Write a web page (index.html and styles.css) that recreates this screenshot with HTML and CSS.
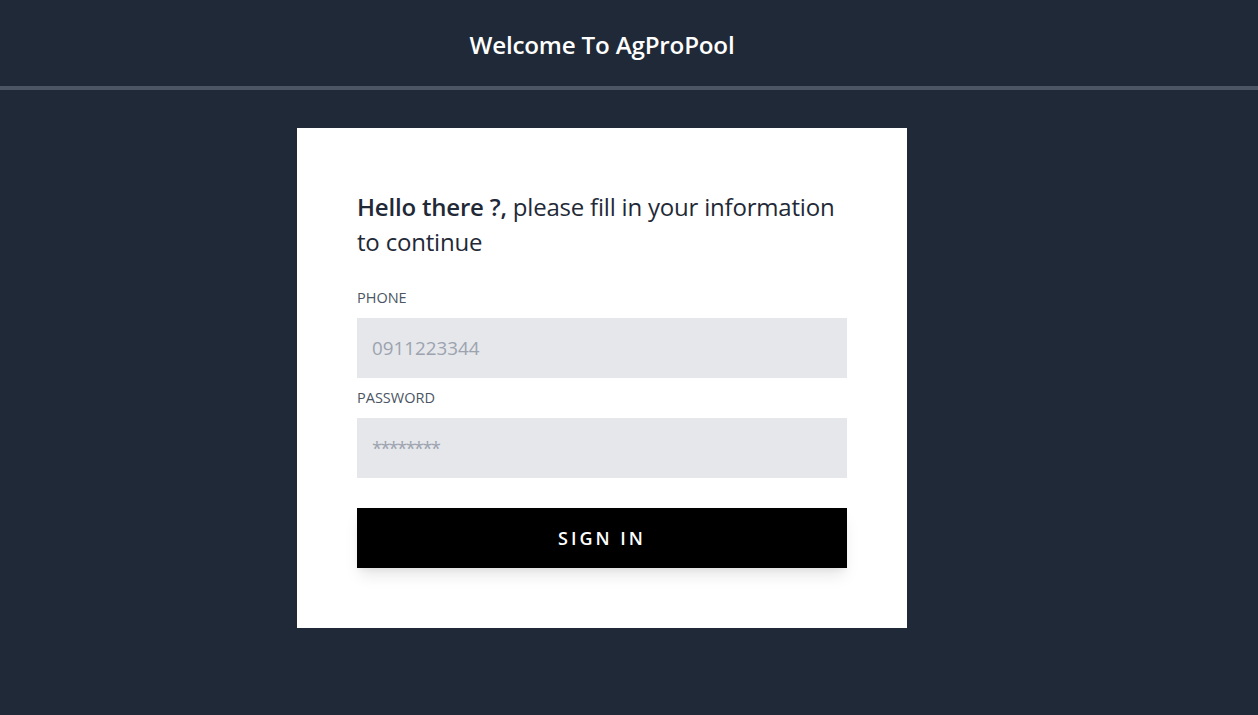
FILE: index.html
```html
<!DOCTYPE html>
<html lang="en">
<head>
<meta charset="utf-8">
<title>AgProPool</title>
<link rel="stylesheet" href="styles.css">
</head>
<body>
  <header class="topbar">
    <div class="container topbar-inner">
      <h1 class="title">Welcome To AgProPool</h1>
    </div>
  </header>
  <main class="container main">
    <form class="card">
      <p class="intro"><strong>Hello there ?,</strong> please fill in your information to continue</p>
      <label class="label" for="phone">Phone</label>
      <input class="field" id="phone" type="text" placeholder="0911223344">
      <label class="label" for="password">Password</label>
      <input class="field field-pass" id="password" type="password" placeholder="********">
      <button class="btn" type="button">Sign in</button>
    </form>
  </main>
</body>
</html>
```

FILE: styles.css
```css
* { box-sizing: border-box; }
html, body {
  margin: 0;
  padding: 0;
  background: #1f2937;
  font-family: "Open Sans", "Noto Sans", sans-serif;
}
body { min-height: 715px; }
.container {
  width: 1204px;
}
.topbar {
  border-bottom: 4px solid #4b5563;
}
.topbar-inner {
  height: 86px;
  display: flex;
  align-items: center;
  justify-content: center;
  padding-top: 2px;
}
.title {
  margin: 0;
  color: #ffffff;
  font-size: 24.2px;
  font-weight: 600;
  letter-spacing: -0.2px;
}
.main {
  display: flex;
  justify-content: center;
  padding-top: 38px;
}
.card {
  width: 610px;
  background: #ffffff;
  padding: 60px;
  display: flex;
  flex-direction: column;
}
.intro {
  margin: 0 0 30px;
  font-size: 24px;
  line-height: 35px;
  color: #1f2937;
  letter-spacing: -0.2px;
  padding-top: 1px;
  height: 70px;
}
.intro strong { font-weight: 600; }
.label {
  display: block;
  text-transform: uppercase;
  font-size: 14.5px;
  line-height: 20px;
  color: #4b5563;
  margin-bottom: 10px;
}
.field {
  display: block;
  width: 100%;
  height: 60px;
  border: 0;
  outline: none;
  background: #e5e7eb;
  padding: 0 15px;
  font-family: inherit;
  font-size: 18.8px;
  color: #1f2937;
  margin-bottom: 10px;
}
.field::placeholder { color: #9ca3af; }
.field-pass { margin-bottom: 30px; }
.field-pass::placeholder { letter-spacing: -1.5px; font-size: 18px; }
.btn {
  height: 60px;
  width: 100%;
  border: 0;
  background: #000000;
  color: #ffffff;
  font-family: inherit;
  font-size: 18px;
  font-weight: 600;
  letter-spacing: 3px;
  text-transform: uppercase;
  box-shadow: 0 10px 15px -3px rgba(0,0,0,0.1), 0 4px 6px -2px rgba(0,0,0,0.05);
  cursor: pointer;
}
```
